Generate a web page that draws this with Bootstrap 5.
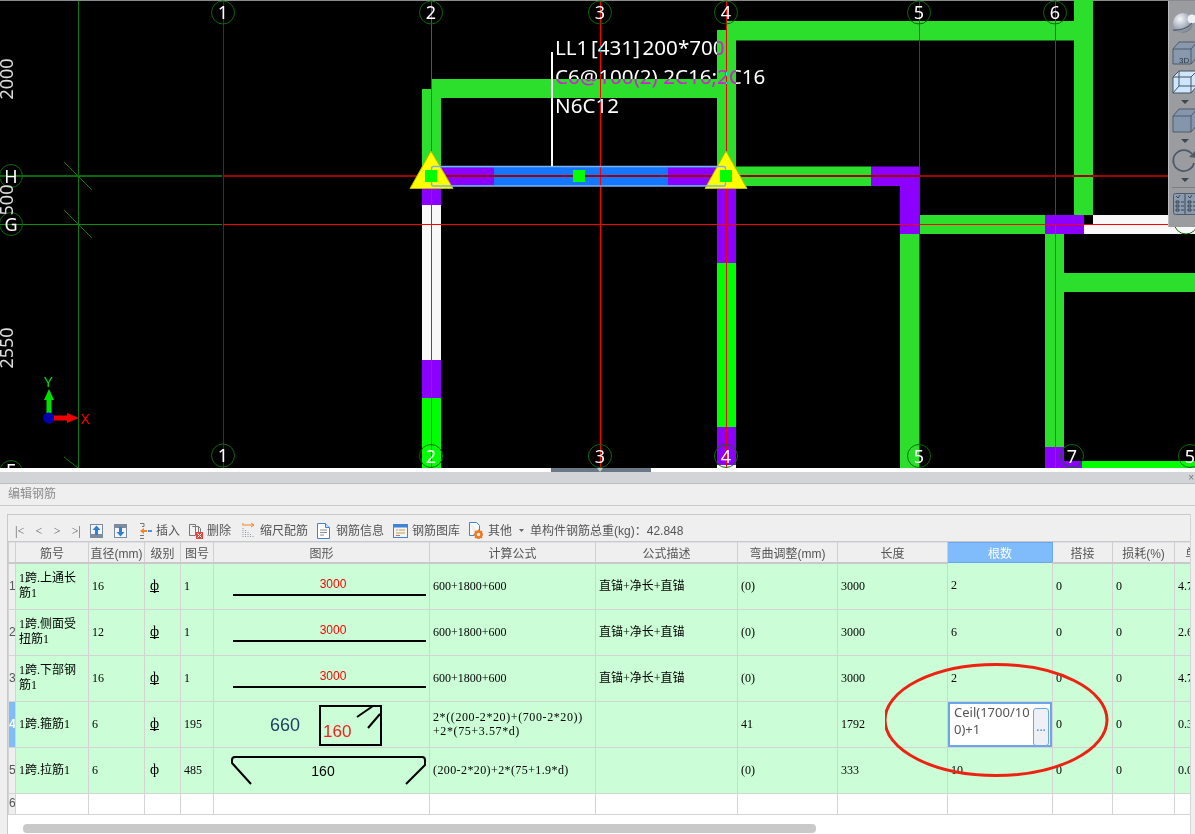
<!DOCTYPE html>
<html lang="zh">
<head>
<meta charset="utf-8">
<title>编辑钢筋</title>
<link href="https://cdn.jsdelivr.net/npm/bootstrap@5.3.0/dist/css/bootstrap.min.css" rel="stylesheet">
<style>
html,body{margin:0;background:#fff;overflow:hidden}
body{width:1195px;height:834px;font-family:"Liberation Sans","Noto Sans CJK SC",sans-serif;font-size:12px;color:#555}
.cad-view{height:468px;background:#000;overflow:hidden}
.cad-view>svg{display:block}
.cad-note{font-family:"Noto Sans",sans-serif;font-size:20.6px;fill:#fff;mix-blend-mode:difference}
.note-tight{word-spacing:-2.7px}
.axis-num{font-family:"Noto Sans",sans-serif;fill:#fff;font-size:18px;text-anchor:middle}
.dim-num{font-family:"Noto Sans",sans-serif;fill:#ddd;font-size:18px;text-anchor:middle}
.view-rail{top:1px;right:0;width:27px;height:226px;background:#9b9c9f;border-left:1px solid #b9bbbd;overflow:hidden}
.split-strip{height:4px;background:#fff}
.split-grip{width:100px;height:4px;margin-left:551px;background:#6b7886}
.split-grip svg{display:block;margin-left:45px}
.split-bar{height:12px;background:#d3d4d8;border-bottom:1px solid #bdbec2;padding-right:1px;color:#777;font-size:10px;line-height:11px}
.title-bar{height:22px;background:#efefef;border-bottom:1px solid #c9c9c9;padding-left:8px;line-height:21px;color:#8b8b8b}
.editor-wrap{height:328px;background:#efefef;padding:8px 4px 0 7px}
.editor-panel{height:320px;background:#fff;border:1px solid #c9c9c9;border-right-color:#d5d5d5;border-bottom:0}
.tool-row{height:26px;background:#efefef;padding-left:7px;padding-top:5px;gap:9px;white-space:nowrap}
.nav-arrows{width:66px;color:#555;font-family:"Liberation Serif",serif;font-size:12px}
.tool-item{gap:4px}
.tool-item svg{display:block;flex:none}
.tool-down{margin-left:2px}
.tool-insert{margin-left:3px}
.tool-ruler{margin-left:2px;gap:5px}
.tool-page{gap:6px}
.tool-other{gap:5px}
.tool-caret{margin-left:2px}
.tool-total{margin-left:-3px}
.grid-clip{height:274px;overflow:hidden;border-top:1px solid #c9c9c9}
.rebar-grid{width:1232px;table-layout:fixed;border-collapse:collapse;margin:0;font-family:"Liberation Serif","Noto Sans CJK SC",serif;font-size:12px;line-height:15px;color:#000}
.rebar-grid>thead>tr>th{height:20px;padding:0;background:#efefef;border:1px solid #d0d0d0;border-top:0;border-bottom:2px solid #c9c9c9;font-family:"Liberation Sans","Noto Sans CJK SC",sans-serif;font-weight:400;color:#555;text-align:center;white-space:nowrap;overflow:hidden;box-shadow:none}
.rebar-grid>thead>tr>th.col-active{background:#80bbfb;color:#fff;border:1px solid #6aa6ec}
.rebar-grid>tbody>tr>td{height:46px;padding:0 0 0 3px;background:#cbfdd6;border:1px solid #d4d4d4;vertical-align:middle;box-shadow:none;overflow:hidden;color:#000}
.rebar-grid>tbody>tr>td:nth-child(2){padding-right:4px}
.rebar-grid>tbody>tr>td.formula-two{line-height:14px;letter-spacing:.6px}
.rebar-grid>tbody>tr>td.formula-one{letter-spacing:.4px}
.rebar-grid>tbody>tr>td.row-no{padding:0;text-align:center;background:#efefef;color:#555;font-family:"Liberation Sans",sans-serif}
.rebar-grid>tbody>tr>td.row-on{background:#80bbfb;color:#fff;font-weight:700}
.rebar-grid>tbody>tr>td.shape-cell,.rebar-grid>tbody>tr>td.edit-cell{padding:0}
.rebar-grid>tbody>tr.row-empty>td{height:21px;background:#fff}
.rebar-grid>tbody>tr.row-empty>td.row-no{background:#efefef}
.shape-cell svg{display:block}
.grade-mark{display:inline-block;margin-left:2px;font-size:14px;line-height:11px;border-bottom:1px solid #000}
.grade-plain{display:inline-block;margin-left:2px;font-size:14px}
.cell-editor{height:45px;background:#fff;border:2px solid #6aa6ec;padding:0 2px 0 4px;font-family:"Noto Sans",sans-serif;font-size:13px;line-height:17px;color:#555}
.cell-editor span{width:79px;flex:none;word-break:break-all}
.cell-editor .btn{width:16px;height:38px;flex:none;padding:0;border:1px solid #6aa6ec;border-radius:3px;background:#eef0f6;color:#3f83d8;font-size:12px;line-height:30px}
.hscroll{height:19px;padding:9px 0 0 15px;background:#fff}
.hscroll-thumb{width:793px;height:9px;border-radius:4px;background:#c9c9c9}
.note-ring{left:885px;top:662px;pointer-events:none}
</style>
</head>
<body class="position-relative">

<div class="cad-view position-relative">
<svg width="1195" height="468" viewBox="0 0 1195 468" xmlns="http://www.w3.org/2000/svg">
  <rect width="1195" height="468" fill="#000"/>
  <rect width="1195" height="1" fill="#8a8a8a"/>

  <!-- walls -->
  <g fill="#2cdf2c">
    <rect x="422" y="89" width="19" height="90"/>
    <rect x="431" y="79" width="296" height="19"/>
    <rect x="717" y="30" width="19" height="140"/>
    <rect x="726" y="21" width="367" height="19.5"/>
    <rect x="1074" y="0" width="19" height="215"/>
    <rect x="735" y="166.5" width="136" height="19.5"/>
    <rect x="919" y="215" width="126" height="19"/>
    <rect x="1045" y="215" width="39" height="10"/>
    <rect x="900" y="234" width="20" height="234"/>
    <rect x="1045" y="234" width="19" height="213"/>
    <rect x="1064" y="273" width="131" height="19"/>
  </g>
  <g fill="#8c00ff">
    <rect x="871" y="166.5" width="49" height="19.5"/>
    <rect x="900" y="176" width="20" height="58"/>
    <rect x="1045" y="215" width="39" height="19"/>
    <rect x="422" y="186" width="19" height="19"/>
    <rect x="422" y="360" width="19" height="38"/>
    <rect x="717" y="186" width="19" height="77"/>
    <rect x="717" y="427" width="19" height="38"/>
    <rect x="1045" y="447" width="19" height="21"/>
    <rect x="1064" y="461" width="18" height="7"/>
  </g>
  <g fill="#00ff00">
    <rect x="422" y="398" width="19" height="70"/>
    <rect x="717" y="263" width="19" height="164"/>
    <rect x="1082" y="461" width="113" height="7"/>
  </g>
  <g fill="#f8f8f8">
    <rect x="422" y="205" width="19" height="155"/>
    <rect x="717" y="465" width="19" height="3"/>
    <rect x="1093" y="215" width="102" height="10"/>
    <rect x="1084" y="224" width="111" height="10"/>
  </g>

  <!-- selected beam -->
  <rect x="431.5" y="166.5" width="294" height="19.5" rx="2" fill="#1577ff"/>
  <rect x="440" y="167.5" width="54" height="17.5" fill="#8c00ff"/>
  <rect x="668" y="167.5" width="49" height="17.5" fill="#8c00ff"/>

  <!-- grid lines -->
  <g stroke-width="1" shape-rendering="crispEdges">
    <line x1="78.5" y1="1" x2="78.5" y2="468" stroke="#0a7a0a"/>
    <line x1="0" y1="176" x2="222" y2="176" stroke="#0a6a0a" stroke-width="2"/>
    <line x1="0" y1="224.5" x2="222" y2="224.5" stroke="#0b8f0b"/>
    <line x1="223.5" y1="1" x2="223.5" y2="468" stroke="#a80000"/>
    <line x1="431.5" y1="1" x2="431.5" y2="468" stroke="#e01818"/>
    <line x1="600.5" y1="1" x2="600.5" y2="468" stroke="#f00"/>
    <line x1="726.5" y1="1" x2="726.5" y2="468" stroke="#e00"/>
    <line x1="919.5" y1="1" x2="919.5" y2="468" stroke="#d80000"/>
    <line x1="1055.5" y1="1" x2="1055.5" y2="224" stroke="#9a2a00"/>
    <line x1="1055.5" y1="224" x2="1055.5" y2="468" stroke="#c83020"/>
    <line x1="223" y1="176" x2="1168" y2="176" stroke="#a00000" stroke-width="2"/>
    <line x1="223" y1="224.5" x2="1168" y2="224.5" stroke="#f00"/>
  </g>
  <g stroke="#0a7a0a" stroke-width="1">
    <line x1="64" y1="162" x2="92" y2="190"/>
    <line x1="64" y1="210" x2="92" y2="238"/>
    <line x1="64" y1="457" x2="78" y2="468"/>
  </g>

  <!-- axis circles -->
  <g fill="none" stroke="#0a6a0a" stroke-width="1">
    <circle cx="223" cy="12.500" r="11.500"/><circle cx="431" cy="12.500" r="11.500"/><circle cx="600" cy="12.500" r="11.500"/><circle cx="726" cy="12.500" r="11.500"/><circle cx="919" cy="12.500" r="11.500"/><circle cx="1055" cy="12.500" r="11.500"/>
    <circle cx="223" cy="455.500" r="11.500"/><circle cx="431" cy="456" r="11.500"/><circle cx="600" cy="456" r="11.500"/><circle cx="726" cy="456" r="11.500"/><circle cx="919" cy="456" r="11.500"/><circle cx="1072" cy="456" r="11.500"/><circle cx="1190" cy="456" r="11.500"/>
    <circle cx="11" cy="176" r="11.500"/><circle cx="11" cy="224" r="11.500"/><circle cx="11" cy="472" r="11.500"/><circle cx="1186" cy="222" r="12"/>
  </g>
  <g class="axis-num">
    <text class="axis-num" x="223" y="19">1</text><text class="axis-num" x="431" y="19">2</text><text class="axis-num" x="600" y="19">3</text><text class="axis-num" x="726" y="19">4</text><text class="axis-num" x="919" y="19">5</text><text class="axis-num" x="1055" y="19">6</text>
    <text class="axis-num" x="223" y="462">1</text><text class="axis-num" x="431" y="463">2</text><text class="axis-num" x="600" y="463">3</text><text class="axis-num" x="726" y="463">4</text><text class="axis-num" x="919" y="463">5</text><text class="axis-num" x="1072" y="463">7</text><text class="axis-num" x="1190" y="463">5</text>
    <text class="axis-num" x="11" y="183">H</text><text class="axis-num" x="11" y="231">G</text><text class="axis-num" x="11" y="477">E</text>
  </g>
  <text class="dim-num" transform="translate(13,79) rotate(-90)">2000</text>
  <text class="dim-num" transform="translate(13,200) rotate(-90)">500</text>
  <text class="dim-num" transform="translate(13,348) rotate(-90)">2550</text>

  <!-- grips -->
  <polygon points="431,151 453,188.500 410,188.500" fill="#ff0" stroke="#b8b800" stroke-width="1" stroke-linejoin="round"/>
  <polygon points="726,151 747,188.500 705,188.500" fill="#ff0" stroke="#b8b800" stroke-width="1" stroke-linejoin="round"/>
  <rect x="431.500" y="166.500" width="294" height="19.500" rx="2" fill="none" stroke="#7cb2e8" stroke-width="1.500"/>
  <rect x="425" y="170" width="12" height="12" fill="#00ff00"/>
  <rect x="573" y="170" width="12" height="12" fill="#00ff00"/>
  <rect x="720" y="170" width="12" height="12" fill="#00ff00"/>

  <!-- beam annotation -->
  <rect x="551" y="52" width="2" height="114" fill="#fff"/>
  <text class="cad-note note-tight" x="555" y="55">LL1 [431] 200*700</text>
  <text class="cad-note" x="555" y="84">C6@100(2) 2C16;2C16</text>
  <text class="cad-note" x="555" y="113">N6C12</text>

  <!-- coordinate marker -->
  <rect x="46.500" y="396" width="5" height="22" fill="#00e000"/>
  <polygon points="49,389 54,400 44,400" fill="#00e000"/>
  <rect x="49" y="415.500" width="19" height="5" fill="#f00000"/>
  <polygon points="79,418 67,413 67,423" fill="#f00000"/>
  <circle cx="48.700" cy="418" r="5.500" fill="#0000b0"/>
  <text x="44" y="387" font-family="Noto Sans" font-size="15" fill="#00e000">Y</text>
  <text x="81" y="424" font-family="Noto Sans" font-size="15" fill="#f00000">X</text>
</svg>

<div class="view-rail position-absolute">
<svg width="27" height="226" viewBox="1168 1 27 226" xmlns="http://www.w3.org/2000/svg">
  <defs><radialGradient id="globeShade" cx=".35" cy=".3" r=".8"><stop offset="0" stop-color="#f6f8fb"/><stop offset=".55" stop-color="#aab2bf"/><stop offset="1" stop-color="#6c7684"/></radialGradient></defs>
  <circle cx="1182" cy="23" r="10" fill="url(#globeShade)"/>
  <circle cx="1191" cy="19" r="4.500" fill="#eef0f4"/>
  <path d="M1172 30c7 1 15-2 19-7" fill="none" stroke="#4d5662" stroke-width="1.200"/>
  <path d="M1172 49l6-7h18v15l-6 7h-18zM1172 49h18v15M1190 49l6-7" fill="#8899ad" stroke="#4e5a68"/>
  <text x="1178" y="63" font-family="Liberation Sans" font-size="8" fill="#2d3540">3D</text>
  <path d="M1172 77l6-6h18v15l-6 7h-18z" fill="#cfe6ff" stroke="#47525f"/>
  <path d="M1172 77h18v16M1190 77l6-6M1178 71v15h18M1178 86l-6 7" fill="none" stroke="#47525f"/>
  <polygon points="1180,100 1188,100 1184,104" fill="#3e4650"/>
  <path d="M1172 116l6-7h18v16l-6 7h-18z" fill="#8496ac" stroke="#4e5a68"/>
  <path d="M1172 116h18v16M1190 116l6-7" fill="none" stroke="#4e5a68"/>
  <polygon points="1180,139 1188,139 1184,143" fill="#3e4650"/>
  <path d="M1191 154a10.500 10.500 0 1 0 2 9" fill="none" stroke="#4e5a68" stroke-width="1.800"/>
  <polygon points="1188,157 1195,150 1195,158" fill="#4e5a68"/>
  <polygon points="1180,178 1188,178 1184,182" fill="#3e4650"/>
  <rect x="1171" y="187" width="24" height="1" fill="#7b7d80"/>
  <rect x="1172.500" y="193.500" width="30" height="21" rx="2" fill="#8a9bb0" stroke="#4e5a68"/>
  <path d="M1184 194v20M1175 201h3v2h-3zM1175 205h3v2h-3zM1175 209h3v2h-3zM1180 202h3M1180 206h3M1180 210h3M1187 201h3v2h-3zM1187 205h3v2h-3zM1187 209h3v2h-3zM1192 202h3M1192 206h3M1192 210h3M1175 196l2 2 2-3M1187 196l2 2 2-3" fill="none" stroke="#28303a" stroke-width=".8"/>
</svg>
</div>
</div>

<div class="split-strip"><div class="split-grip"><svg width="8" height="4" viewBox="0 0 8 4"><path d="M1 0h6L4 4z" fill="#c4c8cc"/></svg></div></div>
<div class="split-bar text-end">×</div>
<div class="title-bar">编辑钢筋</div>

<div class="editor-wrap">
<div class="editor-panel">
  <div class="tool-row d-flex align-items-center">
    <div class="nav-arrows d-flex justify-content-between"><span>|&lt;</span><span>&lt;</span><span>&gt;</span><span>&gt;|</span></div>
    <div class="tool-item d-flex align-items-center">
      <svg width="13" height="14" viewBox="0 0 13 14"><rect width="13" height="14" fill="#7d8b9a"/><rect x="1" y="1" width="11" height="9" fill="#f3f6fa"/><path d="M6.500 1.500l4 4.500H8v5H5V6H2.500z" fill="#2f7fd6"/></svg>
    </div>
    <div class="tool-item tool-down d-flex align-items-center">
      <svg width="13" height="14" viewBox="0 0 13 14"><rect width="13" height="14" fill="#7d8b9a"/><rect x="1" y="4" width="11" height="9" fill="#f3f6fa"/><path d="M6.500 12.500l-4-4.500H5V3h3v5h2.500z" fill="#2f7fd6"/></svg>
    </div>
    <div class="tool-item tool-insert d-flex align-items-center">
      <svg width="13" height="16" viewBox="0 0 13 16"><path d="M1 .5h4v3H3M5 15.500H1M1 12.500h4" fill="none" stroke="#777"/><path d="M1 8l4-3v2h3v2H5v2z" fill="#f0842a"/><rect x="9" y="7" width="4" height="2" fill="#4b93dd"/></svg>
      <span>插入</span>
    </div>
    <div class="tool-item d-flex align-items-center">
      <svg width="14" height="16" viewBox="0 0 14 16"><path d="M.5 1.500h6v11h-6zM3.500 3.500h6v10" fill="#f2f2f2" stroke="#777"/><path d="M3.500 3.500h6l2 2v4" fill="none" stroke="#777"/><rect x="7" y="9" width="7" height="7" fill="#e2453e"/><path d="M8.500 10.500l4 4m0-4l-4 4" stroke="#fff"/></svg>
      <span>删除</span>
    </div>
    <div class="tool-item tool-ruler d-flex align-items-center">
      <svg width="13" height="15" viewBox="0 0 13 15"><path d="M2 2h10M9 0l3 2-3 2" fill="none" stroke="#f0842a"/><path d="M1 0v3" stroke="#f0842a"/><path d="M1 5v10M3.500 7v8M6 9v6M8.500 11v4M11 13v2" stroke="#8f9aa5" stroke-dasharray="1 1"/></svg>
      <span>缩尺配筋</span>
    </div>
    <div class="tool-item tool-page d-flex align-items-center">
      <svg width="13" height="16" viewBox="0 0 13 16"><path d="M.5.500h8l4 4v11H.5z" fill="#fff" stroke="#3d84d6"/><path d="M8.500.500v4h4" fill="#cfe3fa" stroke="#3d84d6"/><path d="M3 7h7M3 9.500h7M3 12h4" stroke="#8a8a8a"/></svg>
      <span>钢筋信息</span>
    </div>
    <div class="tool-item d-flex align-items-center">
      <svg width="15" height="14" viewBox="0 0 15 14"><rect x=".5" y=".5" width="14" height="13" fill="#f4f4f4" stroke="#3d84d6"/><rect x="1" y="1" width="13" height="2.500" fill="#3d84d6"/><path d="M3 6h2M6 6h6M3 9h9" stroke="#c4a04a"/><path d="M3 11.500h4" stroke="#d76a6a"/></svg>
      <span>钢筋图库</span>
    </div>
    <div class="tool-item tool-other d-flex align-items-center">
      <svg width="14" height="17" viewBox="0 0 14 17"><path d="M.5.500h7l3 3v7M.5.500v13h5" fill="#fff" stroke="#3d84d6"/><circle cx="9.500" cy="12.500" r="3" fill="none" stroke="#f0781e" stroke-width="2.400"/><path d="M9.500 7.500v2M9.500 15.500v1.500M4.500 12.500h2M12.500 12.500h1.500M6 9l1.500 1.500M11.500 14.500l1.500 1.500M13 9l-1.500 1.500M7.500 14.500L6 16" stroke="#f0781e" stroke-width="1.500"/></svg>
      <span>其他</span>
      <svg class="tool-caret" width="5" height="3" viewBox="0 0 5 3"><path d="M0 0h5L2.500 3z" fill="#666"/></svg>
    </div>
    <span class="tool-total">单构件钢筋总重(kg)：42.848</span>
  </div>

  <div class="grid-clip">
  <table class="table table-bordered rebar-grid">
    <colgroup><col style="width:7px"><col style="width:73px"><col style="width:56px"><col style="width:36px"><col style="width:33px"><col style="width:216px"><col style="width:166px"><col style="width:142px"><col style="width:100px"><col style="width:110px"><col style="width:105px"><col style="width:60px"><col style="width:62px"><col style="width:66px"></colgroup>
    <thead><tr><th></th><th>筋号</th><th>直径(mm)</th><th>级别</th><th>图号</th><th>图形</th><th>计算公式</th><th>公式描述</th><th>弯曲调整(mm)</th><th>长度</th><th class="col-active">根数</th><th>搭接</th><th>损耗(%)</th><th>单重(kg)</th></tr></thead>
    <tbody>
      <tr><td class="row-no">1</td><td>1跨.上通长筋1</td><td>16</td><td><span class="grade-mark">ф</span></td><td>1</td>
        <td class="shape-cell"><svg width="216" height="45" viewBox="0 0 216 45"><text x="119" y="24" text-anchor="middle" font-family="Liberation Sans" font-size="12" fill="#f00">3000</text><rect x="19" y="30" width="193" height="2" fill="#000"/></svg></td>
        <td>600+1800+600</td><td>直锚+净长+直锚</td><td>(0)</td><td>3000</td><td>2</td><td>0</td><td>0</td><td>4.74</td></tr>
      <tr><td class="row-no">2</td><td>1跨.侧面受扭筋1</td><td>12</td><td><span class="grade-mark">ф</span></td><td>1</td>
        <td class="shape-cell"><svg width="216" height="45" viewBox="0 0 216 45"><text x="119" y="24" text-anchor="middle" font-family="Liberation Sans" font-size="12" fill="#f00">3000</text><rect x="19" y="30" width="193" height="2" fill="#000"/></svg></td>
        <td>600+1800+600</td><td>直锚+净长+直锚</td><td>(0)</td><td>3000</td><td>6</td><td>0</td><td>0</td><td>2.66</td></tr>
      <tr><td class="row-no">3</td><td>1跨.下部钢筋1</td><td>16</td><td><span class="grade-mark">ф</span></td><td>1</td>
        <td class="shape-cell"><svg width="216" height="45" viewBox="0 0 216 45"><text x="119" y="24" text-anchor="middle" font-family="Liberation Sans" font-size="12" fill="#f00">3000</text><rect x="19" y="30" width="193" height="2" fill="#000"/></svg></td>
        <td>600+1800+600</td><td>直锚+净长+直锚</td><td>(0)</td><td>3000</td><td>2</td><td>0</td><td>0</td><td>4.74</td></tr>
      <tr><td class="row-no row-on">4</td><td>1跨.箍筋1</td><td>6</td><td><span class="grade-mark">ф</span></td><td>195</td>
        <td class="shape-cell"><svg width="216" height="45" viewBox="0 0 216 45"><text x="71" y="29" text-anchor="middle" font-family="Liberation Sans" font-size="18" fill="#1f3f63">660</text><rect x="106" y="4" width="61" height="39" fill="none" stroke="#000" stroke-width="2"/><path d="M143 15l16-11M154 26l12-14" stroke="#000" stroke-width="2" fill="none"/><text x="109" y="35" font-family="Liberation Sans" font-size="17" fill="#f42020">160</text></svg></td>
        <td class="formula-two">2*((200-2*20)+(700-2*20))<br>+2*(75+3.57*d)</td><td></td><td>41</td><td>1792</td>
        <td class="edit-cell"><div class="cell-editor d-flex"><span>Ceil(1700/100)+1</span><button type="button" class="btn mt-1">...</button></div></td>
        <td>0</td><td>0</td><td>0.39</td></tr>
      <tr><td class="row-no">5</td><td>1跨.拉筋1</td><td>6</td><td><span class="grade-plain">ф</span></td><td>485</td>
        <td class="shape-cell"><svg width="216" height="45" viewBox="0 0 216 45"><path d="M37 36L18 15v-3q0-3 3-3h187q3 0 3 3v5L192 36" fill="none" stroke="#000" stroke-width="2"/><text x="109" y="28" text-anchor="middle" font-family="Liberation Sans" font-size="14" fill="#000">160</text></svg></td>
        <td class="formula-one">(200-2*20)+2*(75+1.9*d)</td><td></td><td>(0)</td><td>333</td><td>10</td><td>0</td><td>0</td><td>0.07</td></tr>
      <tr class="row-empty"><td class="row-no">6</td><td></td><td></td><td></td><td></td><td></td><td></td><td></td><td></td><td></td><td></td><td></td><td></td><td></td></tr>
    </tbody>
  </table>
  </div>
  <div class="hscroll"><div class="hscroll-thumb"></div></div>
</div>
</div>

<svg class="note-ring position-absolute" width="226" height="116" viewBox="0 0 226 116" xmlns="http://www.w3.org/2000/svg"><ellipse cx="111" cy="58" rx="111" ry="55.500" fill="none" stroke="#ee2212" stroke-width="3"/></svg>

</body>
</html>
